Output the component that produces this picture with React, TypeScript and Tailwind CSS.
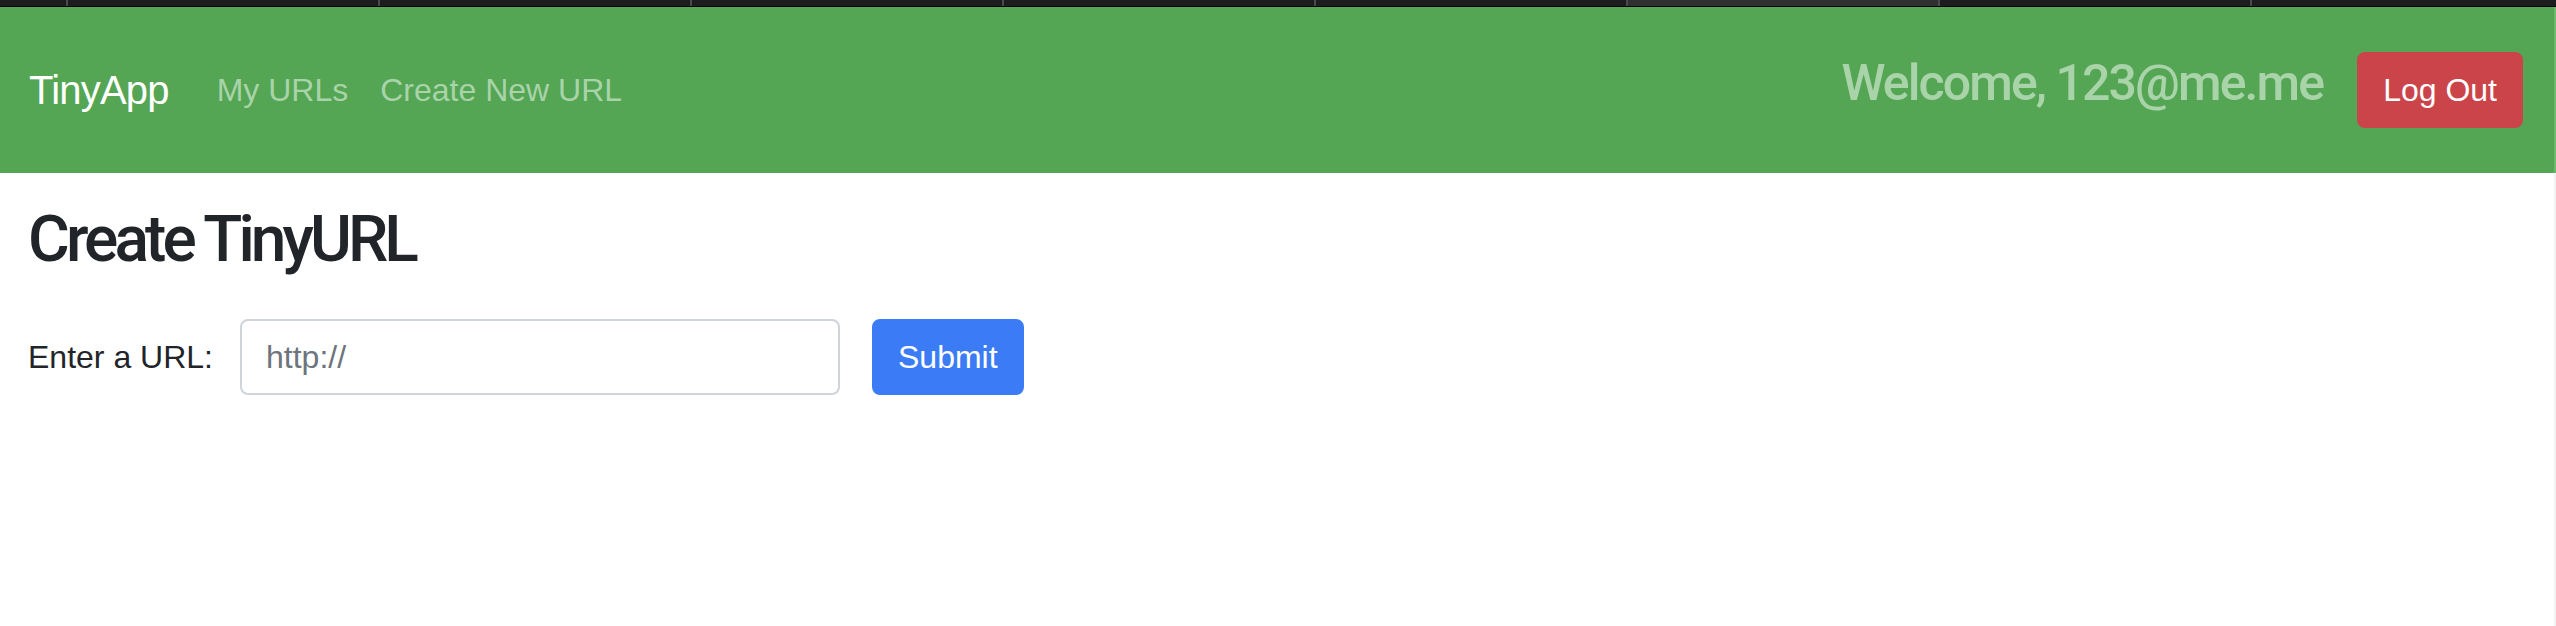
import React from "react";

const tabs = [0, 1, 2, 3, 4, 5, 6, 7];

export default function App() {
  return (
    <div
      className="w-full h-[626px] bg-white flex flex-col overflow-hidden text-[#212529]"
      style={{ fontFamily: '"Liberation Sans", Arial, sans-serif' }}
    >
      {/* browser tab strip */}
      <div className="h-[7px] shrink-0 flex bg-[#1c1c1e] border-b border-black overflow-hidden">
        <div className="w-[66px] shrink-0" />
        {tabs.map((t) => (
          <div
            key={t}
            className={
              t === 5
                ? "w-[312px] shrink-0 border-l-2 border-[#4a4a4c] bg-[#2f2f31]"
                : "w-[312px] shrink-0 border-l-2 border-[#4a4a4c]"
            }
          />
        ))}
      </div>

      {/* navbar */}
      <nav className="h-[166px] shrink-0 flex items-center justify-between bg-[#54a554] pl-[29px] pr-[31px] border-r-2 border-[#6db86d]">
        <div className="flex items-center">
          <a className="text-[40px] leading-[60px] text-white tracking-[-0.8px] mr-[48px]">TinyApp</a>
          <a className="text-[32px] leading-[48px] text-[#a9d3a9]">My URLs</a>
          <a className="text-[32px] leading-[48px] text-[#a9d3a9] ml-[32px]">Create New URL</a>
        </div>
        <div className="flex items-center">
          <span className="font-['Roboto',sans-serif] font-medium text-[50px] leading-[60px] text-[#a9d3a9] tracking-[-1.9px] mr-[34px] mb-[14px]">
            Welcome, 123@me.me
          </span>
          <button className="h-[76px] px-[24px] rounded-[8px] bg-[#cb444a] text-white text-[32px] leading-[48px] border-2 border-[#cb444a]">
            Log Out
          </button>
        </div>
      </nav>

      {/* content */}
      <main className="flex-1 pl-[28px] pt-[28px] border-r-2 border-[#f2f2f2]">
        <h2 className="font-['Roboto',sans-serif] font-medium text-[64px] leading-[77px] tracking-[-3.9px] mb-[41px]">
          Create TinyURL
        </h2>
        <form className="flex items-center" onSubmit={(e) => e.preventDefault()}>
          <label className="w-[212px] shrink-0 text-[32px] leading-[48px]">Enter a URL:</label>
          <input
            type="text"
            placeholder="http://"
            className="w-[600px] h-[76px] px-[24px] border-2 border-[#ced4da] rounded-[8px] text-[32px] placeholder:text-[#6c757d] outline-none"
          />
          <button
            type="submit"
            className="ml-[32px] h-[76px] px-[24px] rounded-[8px] bg-[#3b7cf6] text-white text-[32px] leading-[48px] border-2 border-[#3b7cf6]"
          >
            Submit
          </button>
        </form>
      </main>
    </div>
  );
}
